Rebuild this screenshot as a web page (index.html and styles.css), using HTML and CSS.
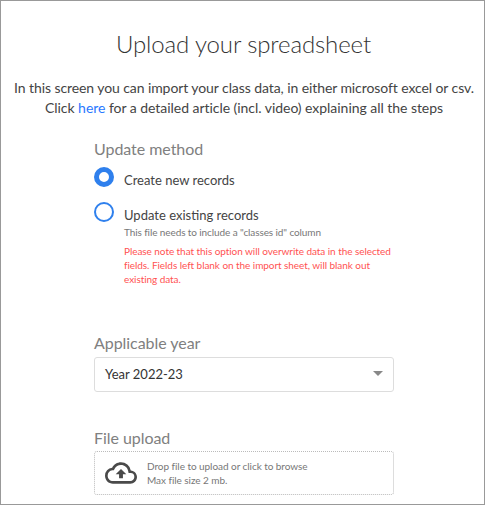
FILE: index.html
```html
<!DOCTYPE html>
<html lang="en">
<head>
<meta charset="utf-8">
<title>Upload your spreadsheet</title>
<link rel="stylesheet" href="styles.css">
</head>
<body>
<main class="page">
  <h1 class="title">Upload your spreadsheet</h1>
  <p class="intro"><span class="intro-lead">In this screen you can import your class data, in either microsoft excel or csv.</span><br>Click <a class="link" href="#">here</a> for a detailed article (incl. video) explaining all the steps</p>
  <form class="form">
    <section class="method">
      <h2 class="label">Update method</h2>
      <div class="option"><span class="radio checked"></span><span class="option-name">Create new records</span></div>
      <div class="option second"><span class="radio"></span><div>
        <div class="option-name">Update existing records</div>
        <p class="hint">This file needs to include a "classes id" column</p>
        <p class="warning">Please note that this option will overwrite data in the selected<br>fields. Fields left blank on the import sheet, will blank out<br>existing data.</p>
      </div></div>
    </section>
    <section class="year">
      <h2 class="label">Applicable year</h2>
      <div class="select"><span>Year 2022-23</span><span class="caret"></span></div>
    </section>
    <section class="upload">
      <h2 class="label">File upload</h2>
      <div class="drop">
        <svg class="cloud" viewBox="0 0 24 24"><path d="M19.350 10.040A7.490 7.490 0 0 0 12 4C9.110 4 6.600 5.640 5.350 8.040A5.994 5.994 0 0 0 0 14c0 3.310 2.690 6 6 6h13c2.760 0 5-2.240 5-5 0-2.640-2.050-4.780-4.650-4.960zM19 18H6c-2.210 0-4-1.790-4-4 0-2.050 1.530-3.760 3.560-3.970l1.070-.11.5-.95A5.469 5.469 0 0 1 12 6c2.620 0 4.880 1.860 5.390 4.430l.3 1.500 1.530.11A2.980 2.980 0 0 1 22 15c0 1.650-1.350 3-3 3zM8 13h2.550v3h2.900v-3H16l-4-4z"/></svg>
        <div class="drop-text">Drop file to upload or click to browse<br>Max file size 2 mb.</div>
      </div>
    </section>
  </form>
</main>
</body>
</html>
```
FILE: styles.css
```css
* { box-sizing: border-box; }
body { margin: 0; background: #fff; font-family: Lato, sans-serif; color: #444; }
h1, h2, p { margin: 0; font-weight: 400; }
.page { height: 505px; border: 1px solid #999; padding-top: 27px; overflow: hidden; }
.title { padding-left: 2px; font-size: 24px; line-height: 32px; font-weight: 300; letter-spacing: -.12px; text-align: center; color: #333; }
.intro { margin-top: 18px; padding-left: 3px; font-size: 14px; line-height: 20px; letter-spacing: -.04px; text-align: center; white-space: nowrap; }
.intro-lead { letter-spacing: -.085px; }
.link { color: #2979ff; text-decoration: none; }
.form { width: 300px; margin: 21px 0 0 93px; }
.label { font-size: 16px; line-height: 20px; letter-spacing: -.05px; color: #808080; }
.method { height: 194px; }
.option { display: flex; gap: 10px; margin-top: 8px; }
.second { margin-top: 9px; }
.radio { width: 20px; height: 20px; flex: none; border: 2px solid #2f80ed; border-radius: 50%; }
.checked { border-width: 5px; }
.option-name { font-size: 13px; line-height: 26px; }
.hint, .warning { font-size: 10px; line-height: 14px; white-space: nowrap; }
.hint { margin-top: -3px; letter-spacing: -.1px; color: #777; }
.warning { margin-top: 5px; letter-spacing: -.06px; color: #ff5252; }
.year { height: 95px; }
.select { display: flex; align-items: center; justify-content: space-between; height: 35px; margin-top: 4px; padding: 0 10px 2px; border: 1px solid #ddd; border-radius: 3px; font-size: 13px; color: #333; }
.caret { border: 5px solid transparent; border-top-color: #888; border-bottom: 0; }
.drop { display: flex; align-items: center; height: 44px; margin-top: 3px; padding-left: 10px; border: 1px dotted #bbb; border-radius: 3px; gap: 10px; }
.cloud { width: 32px; height: 32px; fill: #4a4a4a; }
.drop-text { font-size: 10px; line-height: 14px; letter-spacing: -.05px; color: #777; }
```
